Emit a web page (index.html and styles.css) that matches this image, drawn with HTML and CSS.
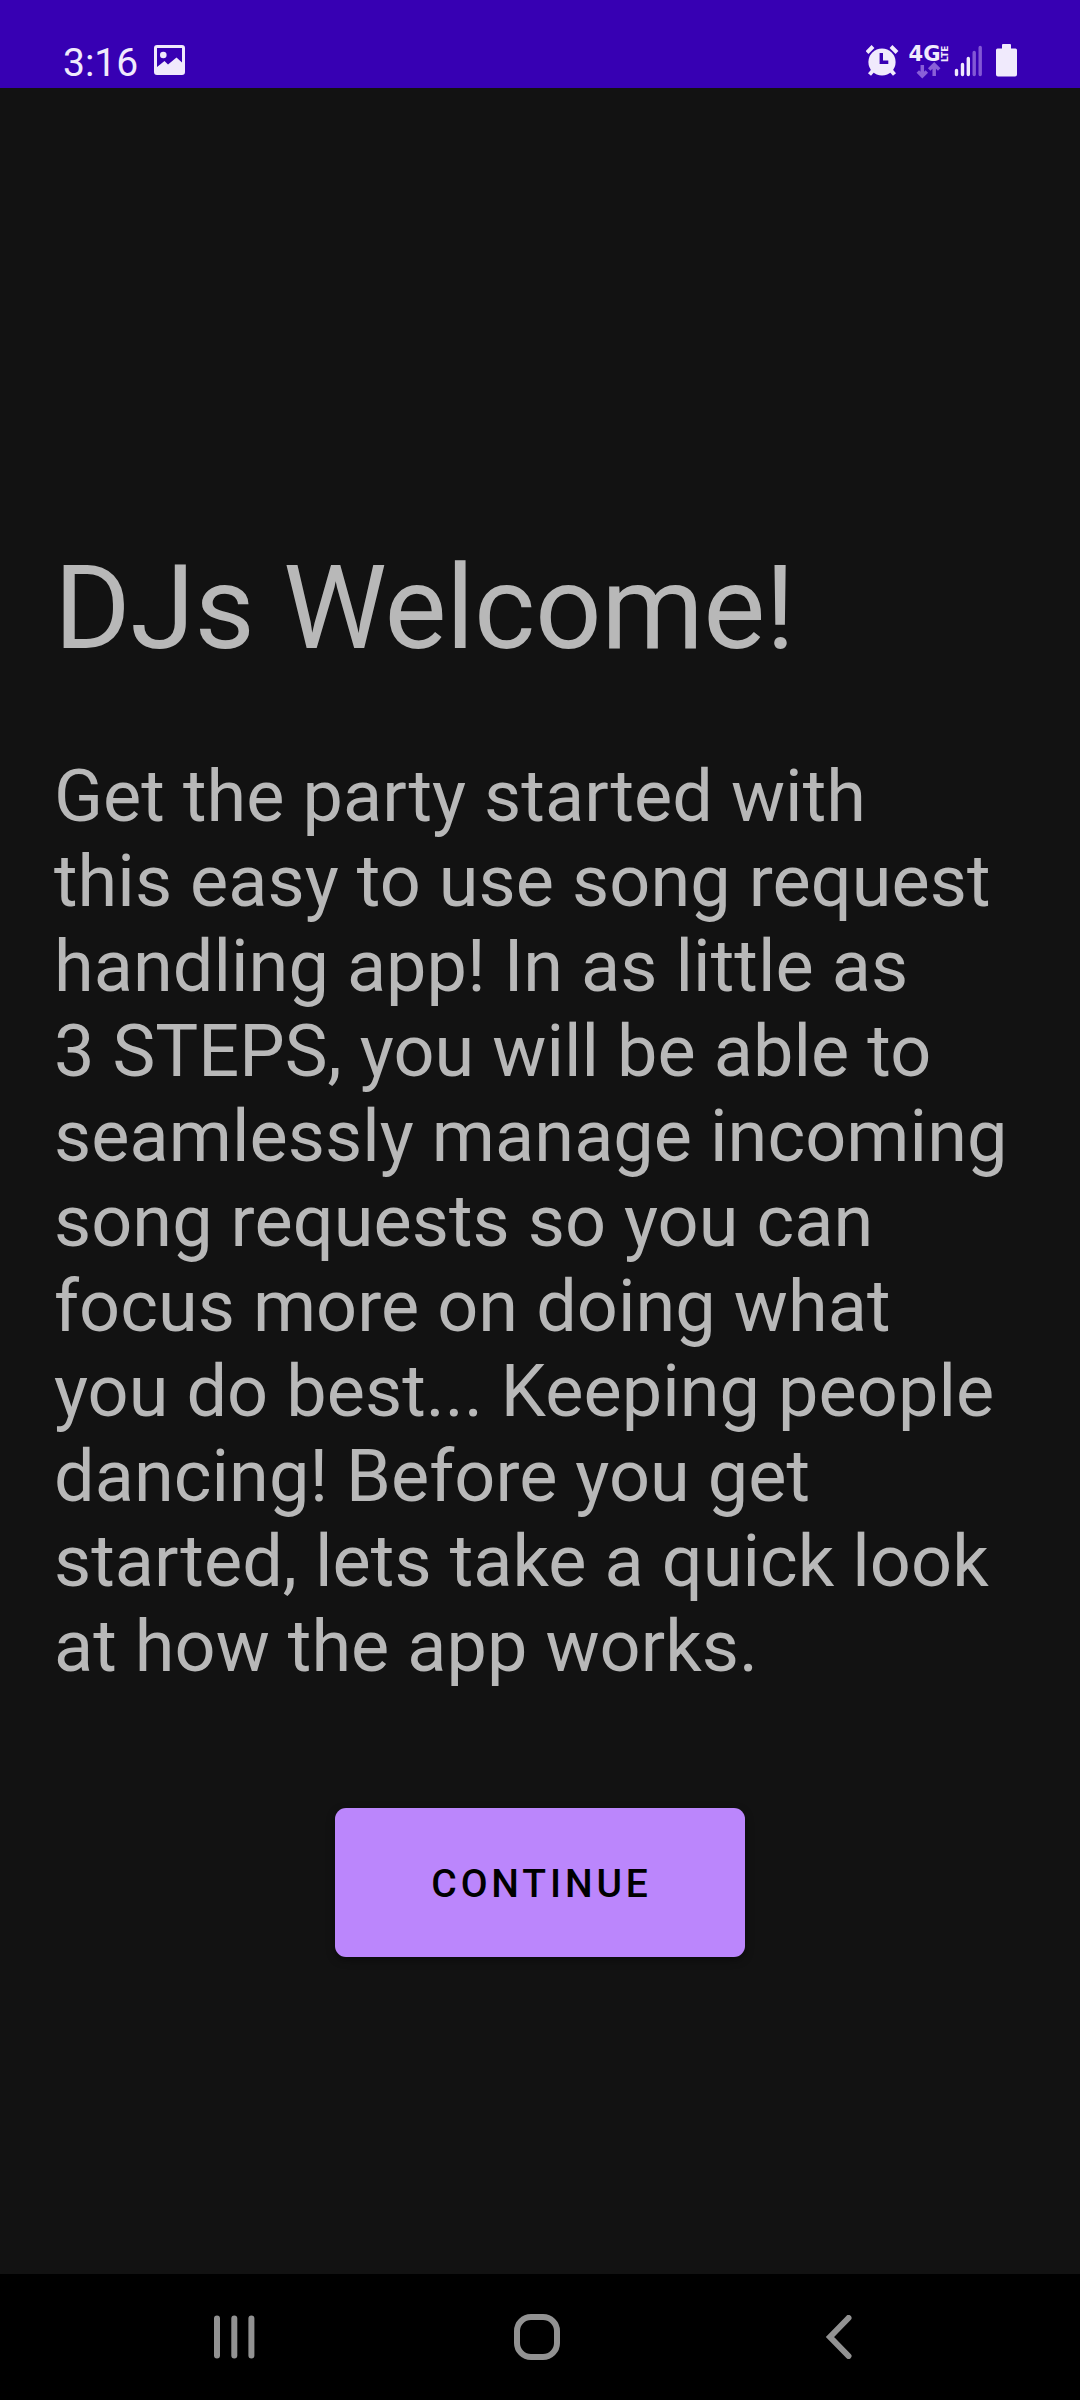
FILE: index.html
```html
<!DOCTYPE html>
<html lang="en">
<head>
<meta charset="utf-8">
<title>DJs Welcome!</title>
<link rel="stylesheet" href="styles.css">
</head>
<body>
<div class="screen">
  <header class="status-bar">
    <div class="status-left">
      <span class="clock">3:16</span>
      <svg class="picture-icon" width="31" height="30" viewBox="0 0 31 30">
        <path fill-rule="evenodd" d="M3 0H28Q31 0 31 3V27Q31 30 28 30H3Q0 30 0 27V3Q0 0 3 0ZM3 3V22L10.500 16L14 19.500L22.500 12.500L28 17.500V3Z"/>
        <circle cx="9.300" cy="10" r="3.300"/>
      </svg>
    </div>
    <div class="status-right">
      <svg width="176" height="58" viewBox="0 -20 176 58">
        <g class="alarm">
          <circle cx="16" cy="18" r="13.600"/>
          <path class="line" d="M1 8.500L7 2.500M25 2.500L31 8.500M7 26.500L3.500 30.500M25 26.500L28.500 30.500"/>
          <path class="hands" d="M15.300 9V18.300H22.300"/>
        </g>
        <text class="network" x="42.500" y="17.300" textLength="32" lengthAdjust="spacingAndGlyphs">4G</text>
        <text class="lte" transform="translate(81.800 18) rotate(-90)" textLength="16.500" lengthAdjust="spacingAndGlyphs">LTE</text>
        <path class="arrows" d="M56.300 21V31M51.800 27.500L56.300 32L60.800 27.500M68.200 32V21.500M63.200 25.500L68.200 20.500L73.200 25.500"/>
        <path class="signal" d="M90.500 26.500V30.500M96.500 20.500V30.500M102.300 14.500V30.500"/>
        <path class="signal dim" d="M108.200 8.500V30.500M114.200 3.500V30.500"/>
        <path d="M137 0H144Q145 0 145 1V4.500H149.500Q151 4.500 151 6V30.500Q151 32.500 149 32.500H132Q130 32.500 130 30.500V6Q130 4.500 131.500 4.500H136V1Q136 0 137 0Z"/>
      </svg>
    </div>
  </header>
  <main class="content">
    <h1 class="title">DJs Welcome!</h1>
    <p class="intro">Get the party started with<br>this easy to use song request<br>handling app! In as little as<br>3 STEPS, you will be able to<br>seamlessly manage incoming<br>song requests so you can<br>focus more on doing what<br>you do best... Keeping people<br>dancing! Before you get<br>started, lets take a quick look<br>at how the app works.</p>
    <button class="continue" type="button">CONTINUE</button>
  </main>
  <nav class="nav-bar">
    <svg width="42" height="44" viewBox="0 0 42 44"><path d="M4 3.500V40.500M21.300 3.500V40.500M38.400 3.500V40.500"/></svg>
    <svg width="46" height="46" viewBox="0 0 46 46"><rect x="3" y="3" width="40" height="40" rx="14"/></svg>
    <svg width="36" height="44" viewBox="-8 0 36 44"><path d="M22.500 3L4 22L22.500 41"/></svg>
  </nav>
</div>
</body>
</html>
```

FILE: styles.css
```css
body {
  margin: 0;
  background: #121212;
  font-family: Roboto, sans-serif;
}

.screen {
  display: flex;
  flex-direction: column;
  width: 1080px;
  height: 2400px;
}

.status-bar {
  display: flex;
  justify-content: space-between;
  box-sizing: border-box;
  height: 88px;
  padding: 0 18px 0 63px;
  background: #3700b3;
  color: #f0eafc;
}

.status-bar svg {
  display: block;
  fill: #f0eafc;
}

.status-left {
  display: flex;
  align-items: flex-start;
  gap: 15px;
}

.clock {
  width: 76px;
  padding-top: 40px;
  font-size: 39px;
  line-height: 46px;
}

.picture-icon {
  margin-top: 45px;
}

.status-right {
  width: 196px;
  padding-top: 24px;
}

.status-right .line {
  fill: none;
  stroke: #f0eafc;
  stroke-width: 4;
}

.status-right .hands {
  fill: none;
  stroke: #3700b3;
  stroke-width: 3.400;
}

.network {
  font: bold 21px "DejaVu Sans", sans-serif;
}

.lte {
  font: bold 9px "DejaVu Sans", sans-serif;
}

.status-right .arrows {
  fill: none;
  stroke: #8a5fd8;
  stroke-width: 3.500;
}

.signal {
  stroke: #f0eafc;
  stroke-width: 3.400;
  stroke-linecap: round;
}

.signal.dim {
  stroke: #8358d5;
}

.content {
  display: flex;
  flex: 1;
  flex-direction: column;
  padding: 452px 54px 0;
}

.title {
  margin: 0;
  color: #b8b8b8;
  font-size: 117px;
  font-weight: 400;
  letter-spacing: -0.45px;
  line-height: 137px;
}

.intro {
  margin: 77px 0 119px;
  color: #b8b8b8;
  font-size: 72px;
  letter-spacing: 0.07px;
  line-height: 85px;
  white-space: nowrap;
}

.continue {
  align-self: center;
  width: 410px;
  height: 149px;
  padding: 3px 0 0 3px;
  border: 0;
  border-radius: 11px;
  background: #bb86fc;
  box-shadow: 0 3px 8px rgba(0, 0, 0, 0.4);
  color: #000;
  font: 500 39px Roboto, sans-serif;
  letter-spacing: 0.099em;
}

.nav-bar {
  display: flex;
  justify-content: space-between;
  align-items: center;
  box-sizing: border-box;
  height: 126px;
  padding: 0 226px 0 213px;
  background: #000;
}

.nav-bar svg {
  fill: none;
  stroke: #929292;
  stroke-width: 6;
  stroke-linecap: round;
}
```
